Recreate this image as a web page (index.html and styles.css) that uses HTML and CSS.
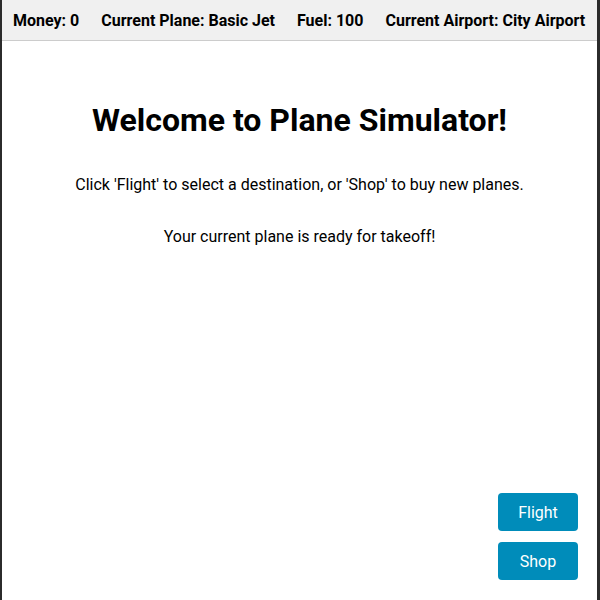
FILE: index.html
```html
<!DOCTYPE html>
<html>
<head>
<meta charset="utf-8">
<link rel="stylesheet" href="styles.css">
</head>
<body>
<div class="app">
  <header class="status-bar">
    <span class="stat">Money: 0</span>
    <span class="stat">Current Plane: Basic Jet</span>
    <span class="stat">Fuel: 100</span>
    <span class="stat">Current Airport: City Airport</span>
  </header>
  <main class="content">
    <h1 class="title">Welcome to Plane Simulator!</h1>
    <p class="text">Click 'Flight' to select a destination, or 'Shop' to buy new planes.</p>
    <p class="text">Your current plane is ready for takeoff!</p>
  </main>
  <div class="actions">
    <button class="btn">Flight</button>
    <button class="btn">Shop</button>
  </div>
</div>
</body>
</html>
```

FILE: styles.css
```css
html, body {
  margin: 0;
  padding: 0;
  height: 100%;
}
body {
  font-family: Roboto, "Liberation Sans", sans-serif;
  color: #000;
  background: #fff;
}
.app {
  box-sizing: border-box;
  height: 100vh;
  display: flex;
  flex-direction: column;
  border-left: 2px solid #2b2b2b;
  border-right: 3px solid #2b2b2b;
}
.status-bar {
  display: flex;
  gap: 22px;
  align-items: center;
  height: 40px;
  padding: 0 11px;
  background: #f0f0f0;
  border-bottom: 1px solid #cccccc;
  font-weight: bold;
  font-size: 16px;
  white-space: nowrap;
}
.content {
  flex: 1;
  text-align: center;
  padding-top: 60px;
}
.title {
  font-size: 32px;
  font-weight: bold;
  margin: 0 0 36px;
}
.text {
  font-size: 16px;
  margin: 0 0 33px;
}
.actions {
  display: flex;
  flex-direction: column;
  align-items: flex-end;
  gap: 11px;
  padding: 0 19px 20px 0;
}
.btn {
  width: 80px;
  height: 38px;
  background: #008cba;
  color: #fff;
  border: none;
  border-radius: 4px;
  font-family: Roboto, "Liberation Sans", sans-serif;
  font-size: 16px;
  padding: 0;
}
```
